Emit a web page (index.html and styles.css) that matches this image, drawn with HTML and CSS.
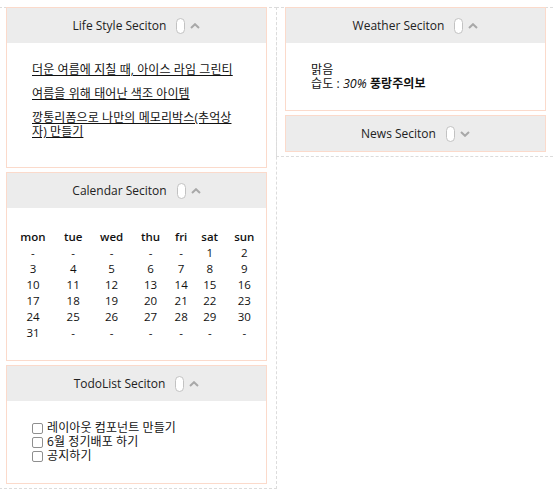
FILE: index.html
```html
<!DOCTYPE html>
<html lang="ko">
<head>
<meta charset="utf-8">
<title>Dashboard</title>
<link rel="stylesheet" href="styles.css">
</head>
<body>
<div class="board">
  <div class="column column-left">
    <section class="panel">
      <header class="panel-head">
        <span class="panel-title">Life Style Seciton</span>
        <span class="toggle"></span>
        <svg class="chev" width="10" height="6" viewBox="0 0 10 6"><polyline points="1,5 5,1.2 9,5" /></svg>
      </header>
      <div class="panel-body body-life">
        <ul class="links ko">
          <li><a href="#">더운 여름에 지칠 때, 아이스 라임 그린티</a></li>
          <li><a href="#">여름을 위해 태어난 색조 아이템</a></li>
          <li><a href="#">깡통리폼으로 나만의 메모리박스(추억상자) 만들기</a></li>
        </ul>
      </div>
    </section>
    <section class="panel">
      <header class="panel-head">
        <span class="panel-title">Calendar Seciton</span>
        <span class="toggle"></span>
        <svg class="chev" width="10" height="6" viewBox="0 0 10 6"><polyline points="1,5 5,1.2 9,5" /></svg>
      </header>
      <div class="panel-body body-cal">
        <table class="cal">
          <thead>
            <tr><th>mon</th><th>tue</th><th>wed</th><th>thu</th><th>fri</th><th>sat</th><th>sun</th></tr>
          </thead>
          <tbody>
            <tr><td>-</td><td>-</td><td>-</td><td>-</td><td>-</td><td>1</td><td>2</td></tr>
            <tr><td>3</td><td>4</td><td>5</td><td>6</td><td>7</td><td>8</td><td>9</td></tr>
            <tr><td>10</td><td>11</td><td>12</td><td>13</td><td>14</td><td>15</td><td>16</td></tr>
            <tr><td>17</td><td>18</td><td>19</td><td>20</td><td>21</td><td>22</td><td>23</td></tr>
            <tr><td>24</td><td>25</td><td>26</td><td>27</td><td>28</td><td>29</td><td>30</td></tr>
            <tr><td>31</td><td>-</td><td>-</td><td>-</td><td>-</td><td>-</td><td>-</td></tr>
          </tbody>
        </table>
      </div>
    </section>
    <section class="panel">
      <header class="panel-head">
        <span class="panel-title">TodoList Seciton</span>
        <span class="toggle"></span>
        <svg class="chev" width="10" height="6" viewBox="0 0 10 6"><polyline points="1,5 5,1.2 9,5" /></svg>
      </header>
      <div class="panel-body body-todo">
        <ul class="todos ko">
          <li><label><input type="checkbox" class="check"><span>레이아웃 컴포넌트 만들기</span></label></li>
          <li><label><input type="checkbox" class="check"><span>6월 정기배포 하기</span></label></li>
          <li><label><input type="checkbox" class="check"><span>공지하기</span></label></li>
        </ul>
      </div>
    </section>
  </div>
  <div class="column column-right">
    <section class="panel">
      <header class="panel-head">
        <span class="panel-title">Weather Seciton</span>
        <span class="toggle"></span>
        <svg class="chev" width="10" height="6" viewBox="0 0 10 6"><polyline points="1,5 5,1.2 9,5" /></svg>
      </header>
      <div class="panel-body body-weather ko">
        <div>맑음</div>
        <div>습도 : <em class="pct">30%</em> <strong>풍랑주의보</strong></div>
      </div>
    </section>
    <section class="panel">
      <header class="panel-head">
        <span class="panel-title">News Seciton</span>
        <span class="toggle"></span>
        <svg class="chev" width="10" height="6" viewBox="0 0 10 6"><polyline points="1,1 5,4.8 9,1" /></svg>
      </header>
    </section>
  </div>
</div>
</body>
</html>
```
FILE: styles.css
```css
html, body {
  margin: 0;
  padding: 0;
  background: #fff;
}

body {
  font-family: "Open Sans", "Noto Sans CJK KR", sans-serif;
  font-size: 12px;
  color: #111;
  overflow: hidden;
}

.board {
  display: flex;
  align-items: flex-start;
  margin-top: 7px;
  margin-left: -1px;
}

.column {
  flex: none;
  border: 1px dashed #dcdcdc;
  box-sizing: border-box;
  padding-bottom: 4px;
}

.column-left {
  width: 278px;
}

.column-right {
  width: 282px;
  margin-left: -1px;
}

.column-left .panel {
  margin-left: 6px;
}

.column-right .panel {
  margin-left: 8px;
}

.panel {
  width: 261px;
  box-sizing: border-box;
  border: 1px solid #fbdacb;
  background: #fff;
  margin-bottom: 4px;
}

.panel:first-child {
  margin-top: -1px;
}

.panel:last-child {
  margin-bottom: 0;
}

.panel-head {
  height: 35px;
  background: #ececec;
  display: flex;
  align-items: center;
  justify-content: center;
  color: #222;
  font-size: 12px;
}

.panel-title {
  line-height: 16px;
}

.toggle {
  display: inline-block;
  width: 9px;
  height: 16px;
  box-sizing: border-box;
  border: 1px solid #c2c2c2;
  border-radius: 4.5px;
  background: #fff;
  margin-left: 10px;
}

.chev {
  margin-left: 5px;
  fill: none;
  stroke: #a8a8a8;
  stroke-width: 2;
}

.ko {
  font-size: 12px;
  letter-spacing: 0.1px;
  line-height: 14px;
}

.panel-body {
  padding: 20px 25px;
}

.body-life {
  padding-bottom: 28px;
}

.links {
  list-style: none;
  margin: 0;
  padding: 0;
  max-width: 206px;
}

.links li + li {
  margin-top: 10px;
}

.links a {
  color: #111;
  text-decoration: underline;
  text-underline-offset: 1px;
}

.body-cal {
  padding: 21px 3px 19px;
}

.cal {
  width: 100%;
  border-collapse: collapse;
  font-size: 11.5px;
  line-height: 14px;
}

.cal th,
.cal td {
  padding: 1px;
  text-align: center;
}

.cal th {
  font-weight: 600;
}

.todos {
  list-style: none;
  margin: 0;
  padding: 0;
}

.todos label {
  display: flex;
  align-items: center;
}

.check {
  appearance: none;
  -webkit-appearance: none;
  width: 11px;
  height: 11px;
  margin: 0 4px 0 0;
  border: 1px solid #8f8f8f;
  border-radius: 2px;
  background: #fff;
  box-sizing: border-box;
  flex: none;
}

.body-weather {
  padding: 20px 25px 19px;
}

.pct {
  font-size: 12.5px;
  letter-spacing: 0;
}

.body-weather strong {
  font-weight: 700;
}
```
